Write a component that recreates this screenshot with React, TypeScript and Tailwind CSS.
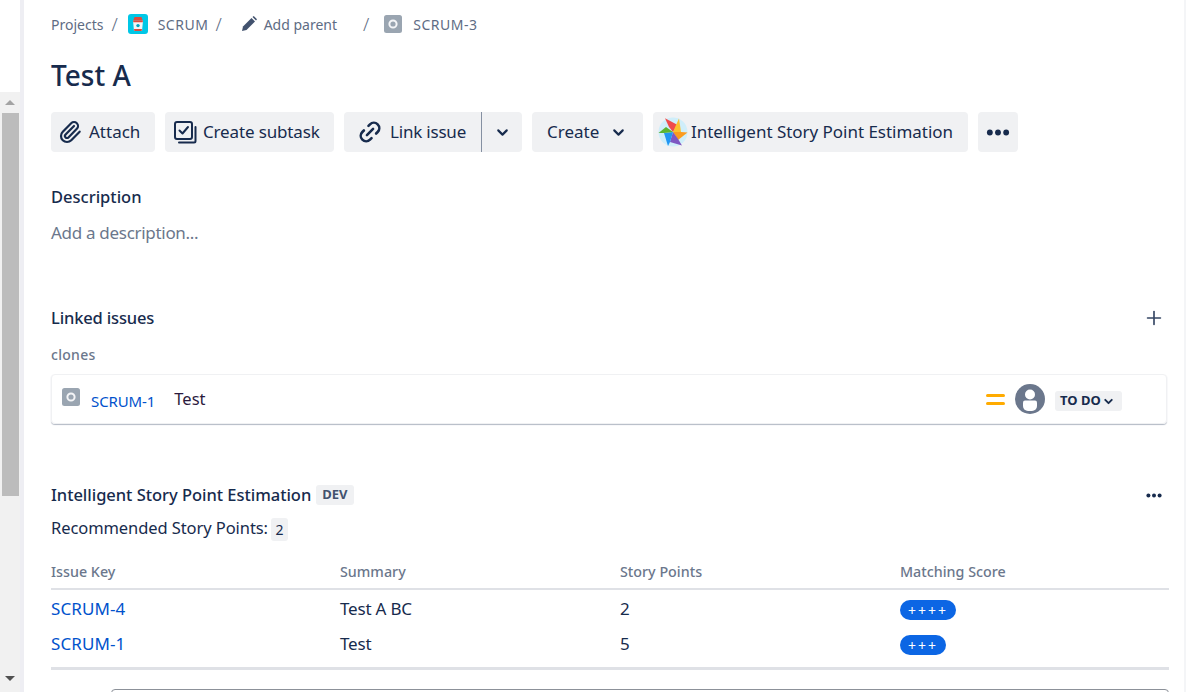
import { ChevronDown, Link2, Paperclip, Plus } from "lucide-react";

const IssueIcon = () => (
  <svg viewBox="0 0 18 18" className="w-[18px] h-[18px] shrink-0">
    <rect width="18" height="18" rx="2.5" fill="#9aa5b1" />
    <circle cx="9" cy="9" r="3.6" fill="none" stroke="#f4f5f7" strokeWidth="2" />
  </svg>
);

const ProjectIcon = () => (
  <svg viewBox="0 0 20 20" className="w-5 h-5 shrink-0">
    <rect width="20" height="20" rx="3" fill="#00c7e6" />
    <path d="M5 6.6h10l-1 10.4H6z" fill="#f4f5f7" />
    <path d="M6.5 3h7l1.2 3.5H5.3z" fill="#de4b3f" />
    <path d="M5 6.5h10l-.3 1.7H5.3zM6 15h8l-.3 2H6.3z" fill="#de4b3f" />
    <circle cx="10" cy="11.6" r="1.7" fill="#00a3bf" />
  </svg>
);

const SubtaskIcon = () => (
  <svg viewBox="0 0 24 24" fill="none" stroke="#172b4d" strokeWidth={2} strokeLinejoin="round" strokeLinecap="round" className="w-6 h-6 shrink-0">
    <rect x="2" y="2" width="17" height="17" rx="2" />
    <path d="M6.5 10.5l3 3 5.5-6.5" />
    <path d="M22.5 7v14a1.5 1.5 0 0 1-1.5 1.5H6" />
  </svg>
);

const Pinwheel = () => (
  <svg viewBox="0 0 30 30" className="w-[30px] h-[30px] shrink-0">
    <circle cx="15" cy="15" r="14.5" fill="#cfeefa" />
    <path d="M7 1.3L19.7 8 15 15l-4-5z" fill="#ef4b4b" />
    <path d="M21 1.5L23 15h-8l3-7z" fill="#fbc02d" />
    <path d="M29.5 15.5L23 15h-8l5 8z" fill="#fb9b1f" />
    <path d="M15 15l5 7 4 6.5L12 25z" fill="#7e57c2" />
    <path d="M15 15l-3 10-2 4-4-13z" fill="#2196f3" />
    <path d="M.5 16L8 10l7 5-9 1z" fill="#5cb531" />
  </svg>
);

const Dots = ({ size }: { size: string }) => (
  <svg viewBox="0 0 20 6" fill="#172b4d" className={size}>
    <circle cx="3" cy="3" r="2.5" />
    <circle cx="10" cy="3" r="2.5" />
    <circle cx="17" cy="3" r="2.5" />
  </svg>
);

const Btn = ({ children, className }: { children: React.ReactNode; className: string }) => (
  <div className={`h-10 flex items-center bg-[#f0f1f3] rounded-[4px] text-[#172b4d] text-[17px] whitespace-nowrap shrink-0 ${className}`}>
    {children}
  </div>
);

const rows = [
  { key: "SCRUM-4", summary: "Test A BC", points: "2", score: "++++" },
  { key: "SCRUM-1", summary: "Test", points: "5", score: "+++" },
];

export default function App() {
  return (
    <div className="flex h-[692px] overflow-hidden bg-white text-[#172b4d] font-['Noto_Sans','Open_Sans',sans-serif]">
      {/* host page scrollbar */}
      <div className="w-5 shrink-0 pt-[92px] flex flex-col">
        <div className="flex-1 bg-[#f1f1f1] flex flex-col items-center">
          <div className="h-[21px] flex items-center justify-center">
            <div className="w-0 h-0 border-x-[5px] border-x-transparent border-b-[5px] border-b-[#a3a3a3]" />
          </div>
          <div className="w-[17px] h-[383px] bg-[#bcbcbc]" />
          <div className="flex-1" />
          <div className="h-[27px] flex items-center justify-center">
            <div className="w-0 h-0 border-x-[5px] border-x-transparent border-t-[5px] border-t-[#505050]" />
          </div>
        </div>
      </div>
      <div className="w-1 shrink-0 bg-[#eeeef3]" />

      <div className="flex-1 min-w-0 pl-[27px] pr-[15px]">
        {/* breadcrumbs */}
        <div className="h-[50px] pb-[2px] flex items-center text-[14px] text-[#5e6c84]">
          <span>Projects</span>
          <span className="ml-[8px] text-[18px] font-light">/</span>
          <span className="ml-[10px]"><ProjectIcon /></span>
          <span className="ml-[10px] tracking-[0.5px]">SCRUM</span>
          <span className="ml-[7px] text-[18px] font-light">/</span>
          <svg viewBox="0 0 16 16" fill="#42526e" className="w-4 h-4 ml-[19px]">
            <path d="M1 15l1-4.5L10.5 2l3.5 3.5L5.5 14z" />
            <path d="M11.5 1l3.5 3.5 1-1.2L12.7 0z" />
          </svg>
          <span className="ml-[7px]">Add parent</span>
          <span className="ml-[26px] text-[18px] font-light">/</span>
          <span className="ml-[15px]"><IssueIcon /></span>
          <span className="ml-[11px] tracking-[0.5px]">SCRUM-3</span>
        </div>

        <h1 className="h-[50px] flex items-center text-[28px] font-medium text-[#172b4d] leading-none">Test A</h1>

        {/* action buttons */}
        <div className="mt-[12px] flex">
          <Btn className="w-[104px] pl-[7px] gap-[7px]">
            <Paperclip size={24} strokeWidth={2.2} className="shrink-0" />
            <span>Attach</span>
          </Btn>
          <Btn className="w-[169px] ml-[10px] pl-[8px] gap-[6px]">
            <SubtaskIcon />
            <span className="tracking-[-0.15px]">Create subtask</span>
          </Btn>
          <Btn className="w-[178px] ml-[10px] pl-[13px]">
            <Link2 size={26} strokeWidth={2.4} className="shrink-0 -rotate-45" />
            <span className="ml-[7px] tracking-[-0.2px]">Link issue</span>
            <div className="ml-[15px] h-10 w-px bg-[#8590a2]" />
            <ChevronDown size={17} strokeWidth={3} className="ml-[12px] shrink-0" />
          </Btn>
          <Btn className="w-[111px] ml-[10px] pl-[15px]">
            <span>Create</span>
            <ChevronDown size={17} strokeWidth={3} className="ml-[11px] shrink-0" />
          </Btn>
          <Btn className="w-[315px] ml-[10px] pl-[5px] gap-[3px]">
            <Pinwheel />
            <span className="tracking-[-0.03px]">Intelligent Story Point Estimation</span>
          </Btn>
          <Btn className="w-10 ml-[10px] justify-center">
            <Dots size="w-[24px] h-[7px]" />
          </Btn>
        </div>

        {/* description */}
        <div className="mt-[33px] h-6 flex items-center text-[16.5px] font-medium">Description</div>
        <div className="mt-[12px] h-6 flex items-center text-[17px] tracking-[-0.3px] text-[#6b778c]">Add a description...</div>

        {/* linked issues */}
        <div className="mt-[59px] h-7 flex items-center justify-between text-[16.5px] font-medium">
          <span className="tracking-[-0.15px]">Linked issues</span>
          <Plus size={22} strokeWidth={1.8} className="mr-[4px] text-[#344563]" />
        </div>
        <div className="mt-[12px] h-[20px] flex items-center text-[14px] font-medium tracking-[0.3px] text-[#6b778c]">clones</div>
        <div className="mt-[10px] mr-[2px] h-[50px] flex items-center rounded-[4px] border border-[#f0f1f3] shadow-[0_1px_1px_#b3bac5] pl-[10px]">
          <div className="-mt-[4px]"><IssueIcon /></div>
          <a className="ml-[11px] mt-[4px] text-[15px] tracking-[-0.1px] text-[#0052cc]">SCRUM-1</a>
          <span className="ml-[19px] text-[16.5px] text-[#2b1a3d]">Test</span>
          <div className="ml-auto mr-[44px] flex items-center">
            <div className="w-[19px] flex flex-col gap-[5px]">
              <div className="h-[3px] bg-[#ffab00] rounded-full" />
              <div className="h-[3px] bg-[#ffab00] rounded-full" />
            </div>
            <svg viewBox="0 0 30 30" className="w-[30px] h-[30px] ml-[10px]">
              <circle cx="15" cy="15" r="15" fill="#6b778c" />
              <circle cx="15" cy="10.5" r="5" fill="#fff" />
              <path d="M8 18.5a2 2 0 0 1 2-2h10a2 2 0 0 1 2 2V22a5 5 0 0 1-5 5h-4a5 5 0 0 1-5-5z" fill="#fff" />
            </svg>
            <div className="ml-[10px] mt-[4px] w-[67px] h-5 bg-[#f0f1f3] rounded-[3px] flex items-center pl-[5px] text-[13px] font-bold text-[#172b4d]">
              <span>TO DO</span>
              <ChevronDown size={13} strokeWidth={3.5} className="ml-[1px]" />
            </div>
          </div>
        </div>

        {/* story point panel */}
        <div className="mt-[58px] h-[26px] flex items-center">
          <span className="text-[16.5px] font-medium tracking-[-0.03px]">Intelligent Story Point Estimation</span>
          <span className="ml-[5px] h-5 px-[6px] flex items-center bg-[#f0f1f3] rounded-[3px] text-[13px] font-bold text-[#42526e]">DEV</span>
          <span className="ml-auto mr-[7px]"><Dots size="w-4 h-[5px]" /></span>
        </div>
        <div className="mt-[8px] h-6 flex items-center text-[16.5px] text-[#172b4d]">
          <span className="tracking-[-0.08px]">Recommended Story Points:</span>
          <span className="ml-[3px] mt-[2px] w-[17px] h-[23px] flex items-center justify-center bg-[#f0f1f3] rounded-[3px] text-[14px]">2</span>
        </div>

        <table className="mt-[18px] w-full table-fixed border-b-[3px] border-[#dfe1e6]">
          <thead>
            <tr className="border-b-2 border-[#dfe1e6] text-[14.3px] font-medium text-[#6b778c] text-left">
              <th className="w-[289px] h-[31px] font-medium p-0 pb-[3px]">Issue Key</th>
              <th className="w-[280px] font-medium p-0 pb-[3px]">Summary</th>
              <th className="w-[280px] font-medium p-0 pb-[3px]">Story Points</th>
              <th className="font-medium p-0 pb-[3px]">Matching Score</th>
            </tr>
          </thead>
          <tbody className="text-[17px]">
            <tr className="h-[2px]"><td colSpan={4} className="p-0" /></tr>
            {rows.map(r => (
              <tr key={r.key} className="h-[35px]">
                <td className="p-0 text-[#0052cc] tracking-[0.1px]">{r.key}</td>
                <td className="p-0 tracking-[-0.2px]">{r.summary}</td>
                <td className="p-0">{r.points}</td>
                <td className="p-0">
                  <span className="inline-flex h-5 px-[8px] items-center rounded-full bg-[#0c66e4] text-white text-[14px] tracking-[2px] align-middle">{r.score}</span>
                </td>
              </tr>
            ))}
            <tr className="h-[7px]"><td colSpan={4} className="p-0" /></tr>
          </tbody>
        </table>

        {/* comment box, cut off by the window */}
        <div className="mt-[19px] ml-[60px] h-10 rounded-[4px] border border-[#8c9199]" />
      </div>
      <div className="w-[2px] shrink-0 bg-[#f4f5f7]" />
    </div>
  );
}
